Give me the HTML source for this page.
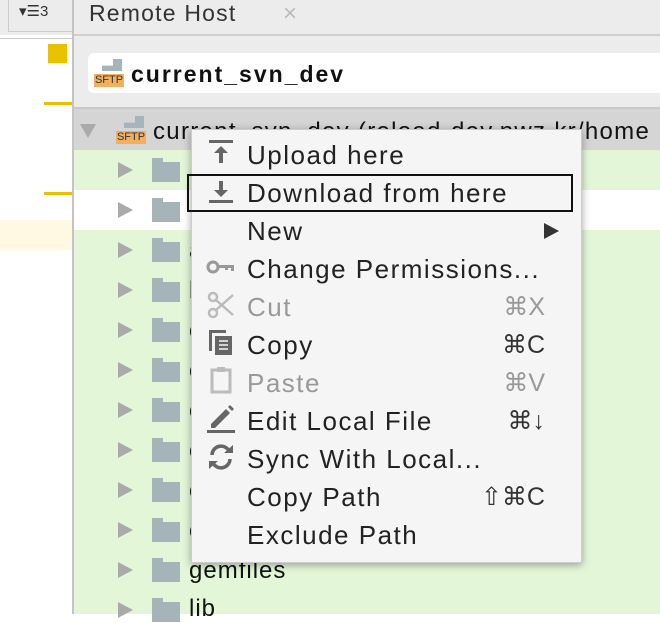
<!DOCTYPE html><html><head><style>
body{margin:0;width:660px;height:614px;overflow:hidden;background:#fff;font-family:"Liberation Sans",sans-serif;position:relative}
.a{position:absolute}
.row{position:absolute;left:74px;width:586px;height:40px}
.tri{position:absolute;left:118px;width:0;height:0;border-left:15px solid #aaa;border-top:8px solid transparent;border-bottom:8px solid transparent}
.fold{position:absolute;left:152px;width:28px;height:20px;background:#a5b4b8}
.fold:before{content:"";position:absolute;left:0;top:-4px;width:11px;height:5px;background:#a5b4b8}
.ft{position:absolute;left:189px;font-size:24px;color:#111;letter-spacing:1px}
.menu{position:absolute;left:191px;top:129px;width:391px;height:434px;background:#f5f5f5;box-shadow:0 2px 8px rgba(0,0,0,.35);border:1px solid #ccc;box-sizing:border-box}
.mi{position:absolute;left:55px;font-size:26px;color:#222;letter-spacing:1.5px;margin-top:1px}
.sc{position:absolute;right:36px;font-size:25px;color:#333;margin-top:1px}
.dis{color:#999}
.sftp{position:absolute;width:30px;height:28px}
</style></head><body>
<div class="a" style="left:0;top:0;width:73px;height:35px;background:#ececec"></div>
<div class="a" style="left:8px;top:0;width:63px;height:31px;border:1px solid #ccc;border-top:none;background:#ececec;font-size:15px;color:#333"><span style="position:absolute;left:10px;top:2px">▾☰3</span></div>
<div class="a" style="left:0;top:38px;width:73px;height:1px;background:#ccc"></div>
<div class="a" style="left:48px;top:44px;width:19px;height:19px;background:#e8c200"></div>
<div class="a" style="left:44px;top:102px;width:29px;height:3px;background:#e8c200"></div>
<div class="a" style="left:44px;top:192px;width:29px;height:3px;background:#e8c200"></div>
<div class="a" style="left:0;top:220px;width:72px;height:30px;background:#fff8e3"></div>
<div class="a" style="left:72px;top:0;width:2px;height:614px;background:#c4c4c4"></div>
<div class="a" style="left:74px;top:0;width:586px;height:108px;background:#ececec"></div>
<div class="a" style="left:89px;top:0;font-size:23px;color:#333;letter-spacing:1.2px">Remote Host</div>
<div class="a" style="left:283px;top:0;font-size:24px;color:#bbb">×</div>
<div class="a" style="left:74px;top:34px;width:586px;height:2px;background:#d0d0d0"></div>
<div class="a" style="left:88px;top:53px;width:580px;height:40px;background:#fff;border-radius:6px"></div>
<div class="sftp" style="left:94px;top:59px"><div class="a" style="left:8px;top:0;width:20px;height:12px;background:#a6b4bc;clip-path:polygon(55% 0,100% 0,100% 100%,0 100%,0 55%,55% 55%)"></div><div class="a" style="left:0;top:15px;width:30px;height:13px;background:#f0b060;font-size:11px;line-height:13px;color:#333;text-align:center">SFTP</div></div>
<div class="a" style="left:131px;top:61px;font-size:23px;font-weight:bold;color:#111;letter-spacing:2px">current_svn_dev</div>
<div class="a" style="left:74px;top:107px;width:586px;height:2px;background:#c8c8c8"></div>
<div class="row" style="top:109px;height:41px;background:#d5d5d5"></div>
<div class="a" style="left:80px;top:124px;width:0;height:0;border-top:14px solid #aaa;border-left:8px solid transparent;border-right:8px solid transparent"></div>
<div class="sftp" style="left:116px;top:116px"><div class="a" style="left:8px;top:0;width:20px;height:12px;background:#a6b4bc;clip-path:polygon(55% 0,100% 0,100% 100%,0 100%,0 55%,55% 55%)"></div><div class="a" style="left:0;top:15px;width:30px;height:13px;background:#f0b060;font-size:11px;line-height:13px;color:#333;text-align:center">SFTP</div></div>
<div class="a" style="left:153px;top:118px;font-size:24px;color:#111;letter-spacing:1.3px;white-space:nowrap">current_svn_dev (reload-dev.nwz.kr/home</div>
<div class="row" style="top:150px;background:#e3f7d8"></div>
<div class="row" style="top:190px;background:#fff"></div>
<div class="row" style="top:230px;height:384px;background:#e3f7d8"></div>
<div class="tri" style="top:162px"></div><div class="fold" style="top:162px"></div>
<div class="tri" style="top:202px"></div><div class="fold" style="top:202px"></div>
<div class="tri" style="top:242px"></div><div class="fold" style="top:242px"></div><div class="ft" style="top:237px">a</div>
<div class="tri" style="top:282px"></div><div class="fold" style="top:282px"></div><div class="ft" style="top:277px">b</div>
<div class="tri" style="top:322px"></div><div class="fold" style="top:322px"></div><div class="ft" style="top:317px">c</div>
<div class="tri" style="top:362px"></div><div class="fold" style="top:362px"></div><div class="ft" style="top:357px">c</div>
<div class="tri" style="top:402px"></div><div class="fold" style="top:402px"></div><div class="ft" style="top:397px">c</div>
<div class="tri" style="top:442px"></div><div class="fold" style="top:442px"></div><div class="ft" style="top:437px">c</div>
<div class="tri" style="top:482px"></div><div class="fold" style="top:482px"></div><div class="ft" style="top:477px">c</div>
<div class="tri" style="top:522px"></div><div class="fold" style="top:522px"></div><div class="ft" style="top:517px">c</div>
<div class="tri" style="top:562px"></div><div class="fold" style="top:562px"></div><div class="ft" style="top:557px">gemfiles</div>
<div class="tri" style="top:602px"></div><div class="fold" style="top:602px"></div><div class="ft" style="top:595px">lib</div>
<div class="menu">
<svg class="a" style="left:15px;top:8px" width="28" height="28" viewBox="0 0 28 28"><rect x="2" y="2" width="24" height="3" fill="#666"/><path d="M14 8 L7 15 H12 V25 H16 V15 H21 Z" fill="#666"/></svg>
<div class="mi" style="top:9px">Upload here</div>
<div class="a" style="left:-5px;top:44px;width:386px;height:38px;border:2px solid #111;box-sizing:border-box"></div>
<svg class="a" style="left:15px;top:48px" width="28" height="28" viewBox="0 0 28 28"><path d="M12 3 H16 V12 H21 L14 19 L7 12 H12 Z" fill="#666"/><rect x="2" y="22" width="24" height="3" fill="#666"/></svg>
<div class="mi" style="top:47px">Download from here</div>
<div class="mi" style="top:85px">New</div>
<div class="a" style="left:352px;top:93px;width:0;height:0;border-left:15px solid #333;border-top:8px solid transparent;border-bottom:8px solid transparent"></div>
<svg class="a" style="left:14px;top:128px" width="30" height="20" viewBox="0 0 30 20"><circle cx="7" cy="9" r="5" fill="none" stroke="#999" stroke-width="3"/><path d="M12 7 H28 V13 H25 V10 H22 V12 H19 V10 H12 Z" fill="#999"/></svg>
<div class="mi" style="top:123px">Change Permissions...</div>
<svg class="a" style="left:15px;top:161px" width="28" height="28" viewBox="0 0 28 28"><circle cx="6" cy="6" r="4" fill="none" stroke="#bbb" stroke-width="2.5"/><circle cx="6" cy="22" r="4" fill="none" stroke="#bbb" stroke-width="2.5"/><path d="M9 9 L26 24 M9 19 L26 4" stroke="#bbb" stroke-width="2.5"/></svg>
<div class="mi dis" style="top:161px">Cut</div><div class="sc dis" style="top:161px">⌘X</div>
<svg class="a" style="left:16px;top:199px" width="26" height="28" viewBox="0 0 26 28"><path d="M1 1 H18 V4 H4 V22 H1 Z" fill="#666"/><rect x="7" y="7" width="17" height="19" fill="#666"/><path d="M11 12 H20 M11 16 H20 M11 20 H20" stroke="#f5f5f5" stroke-width="1.5"/></svg>
<div class="mi" style="top:199px">Copy</div><div class="sc" style="top:199px">⌘C</div>
<svg class="a" style="left:18px;top:236px" width="24" height="28" viewBox="0 0 24 28"><rect x="2" y="4" width="18" height="22" fill="none" stroke="#bbb" stroke-width="3"/><rect x="7" y="1" width="8" height="5" fill="#bbb"/></svg>
<div class="mi dis" style="top:237px">Paste</div><div class="sc dis" style="top:237px">⌘V</div>
<svg class="a" style="left:14px;top:274px" width="30" height="30" viewBox="0 0 30 30"><path d="M5 20 L20 5 L24 9 L9 24 H5 Z" fill="#666"/><path d="M22 3 L24 1 L28 5 L26 7 Z" fill="#666"/><rect x="1" y="26" width="28" height="3" fill="#666"/></svg>
<div class="mi" style="top:275px">Edit Local File</div><div class="sc" style="top:275px">⌘↓</div>
<svg class="a" style="left:15px;top:313px" width="28" height="28" viewBox="0 0 28 28"><path d="M5 12 A9 9 0 0 1 22 8" fill="none" stroke="#666" stroke-width="3.5"/><path d="M23 16 A9 9 0 0 1 6 20" fill="none" stroke="#666" stroke-width="3.5"/><path d="M17 10 H26 V2 Z M11 18 H2 V26 Z" fill="#666"/></svg>
<div class="mi" style="top:313px">Sync With Local...</div>
<div class="mi" style="top:351px">Copy Path</div><div class="sc" style="top:351px">⇧⌘C</div>
<div class="mi" style="top:389px">Exclude Path</div>
</div>
</body></html>
